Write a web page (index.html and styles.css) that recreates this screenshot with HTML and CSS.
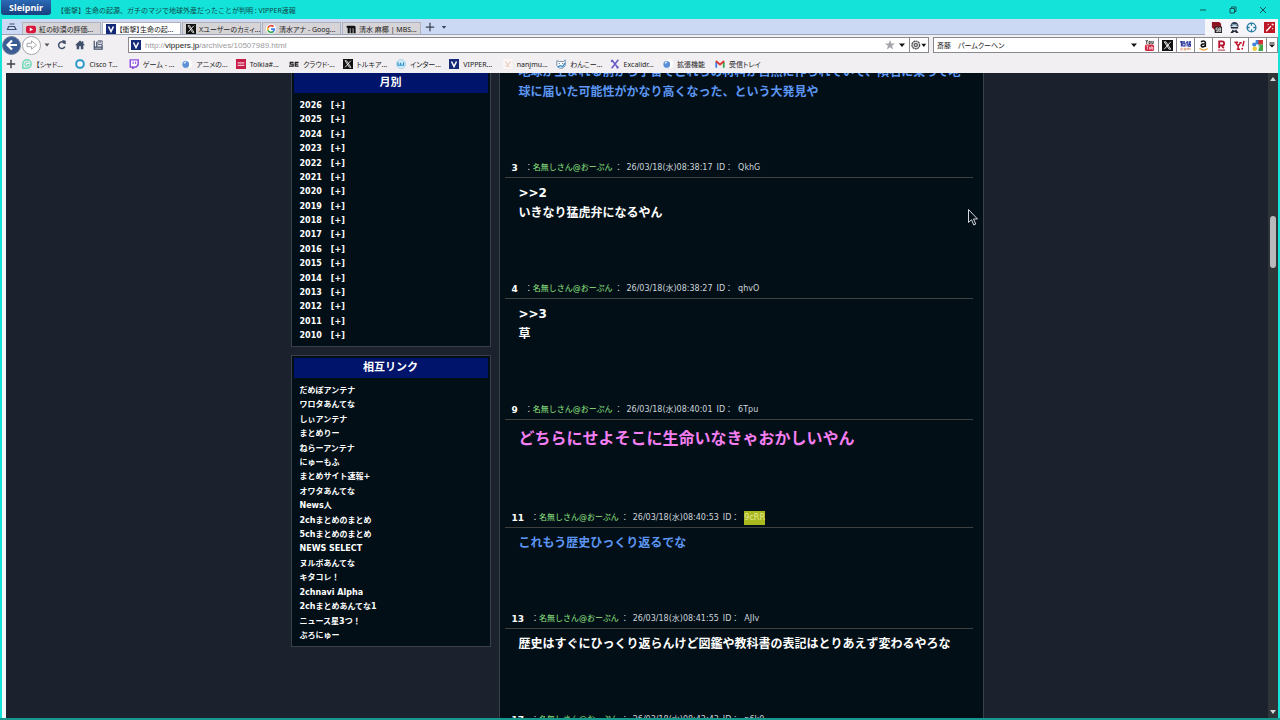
FILE: index.html
```
<!DOCTYPE html>
<html lang="ja">
<head>
<meta charset="utf-8">
<title>【衝撃】生命の起源、ガチのマジで地球外産だったことが判明 : VIPPER速報</title>
<link rel="stylesheet" href="styles.css">
</head>
<body>
<header class="titlebar">
  <button class="brand">Sleipnir</button>
  <span class="window-title">【衝撃】生命の起源、ガチのマジで地球外産だったことが判明 : VIPPER速報</span>
  <div class="window-buttons">
    <button aria-label="最小化"><svg viewBox="0 0 10 10"><path d="M2 5h6"/></svg></button>
    <button aria-label="元に戻す"><svg viewBox="0 0 10 10"><path d="M2 3.5h4.5V8H2zM3.5 3.500V2H8v4.500H6.500"/></svg></button>
    <button aria-label="閉じる"><svg viewBox="0 0 10 10"><path d="M2 2l6 6M8 2l-6 6"/></svg></button>
  </div>
</header>

<div class="chrome">
  <div class="tab-row">
    <button class="tab-home" aria-label="タブ一覧"><svg viewBox="0 0 12 12"><path d="M3.500 3h5M2.500 5.500h6l1.500 3H1.500z" fill="none" stroke="#3c506e" stroke-width="1.200"/></svg></button>
    <nav class="tabs">
      <button class="tab"><svg viewBox="0 0 12 12"><rect x="0" y="2" width="12" height="9" rx="2.500" fill="#d9163c"/><path d="M4.500 4.200l4 2.300-4 2.300z" fill="#fff"/></svg><span>紅の砂漠の評価...</span></button>
      <button class="tab active"><svg viewBox="0 0 12 12"><rect width="12" height="12" fill="#142a78"/><path d="M3 3l3 6 3-6" fill="none" stroke="#fff" stroke-width="1.800"/></svg><span>【衝撃】生命の起...</span></button>
      <button class="tab"><svg viewBox="0 0 12 12"><rect width="12" height="12" fill="#111"/><path d="M2.500 2h1.800l5.200 8H7.700zM9.500 2l-7 8" fill="none" stroke="#fff"/></svg><span>Xユーザーのカミィ...</span></button>
      <button class="tab"><svg viewBox="0 0 12 12"><circle cx="6" cy="6" r="6" fill="#fff"/><g fill="none" stroke-width="2"><path d="M9 3.200A4 4 0 0 0 2.400 4.500" stroke="#e8443a"/><path d="M2.400 4.500a4 4 0 0 0 0 3.200" stroke="#f2b91c"/><path d="M2.400 7.700A4 4 0 0 0 8.600 9" stroke="#35a552"/><path d="M8.600 9A4 4 0 0 0 10 6.200H6" stroke="#3f7ee8"/></g></svg><span>清水アナ - Goog...</span></button>
      <button class="tab"><svg viewBox="0 0 12 12"><path d="M1 2h9a2 2 0 0 1 1.500 2v7h-2.500V5H8v6H5.500V5H4.500v6H2V5L.5 4z" fill="#111"/></svg><span>清水 麻椰 | MBS...</span></button>
    </nav>
    <button class="new-tab" aria-label="新しいタブ"><svg viewBox="0 0 12 12"><path d="M6 1v10M1 6h10" stroke="#39424f" stroke-width="1.500"/></svg></button>
    <button class="tab-menu" aria-label="タブメニュー"><svg viewBox="0 0 12 12"><path d="M2.500 4.500h7L6 8.500z" fill="#39465b"/></svg></button>
    <div class="extensions">
      <button aria-label="ブロッカー"><svg viewBox="0 0 12 12"><path d="M1 0h8l2 2v4L6 10 1 6z" fill="#8d1420"/><rect x="4" y="5" width="8" height="7" fill="#222"/><path d="M7.500 6.500H5.500v2h2v2h-2M10.500 6.500h-2v4h2v-4M8.500 8.500h2" fill="none" stroke="#fff" stroke-width=".8"/></svg></button>
      <button aria-label="エージェント"><svg viewBox="0 0 12 12"><path d="M1.500 5C2 1 4 0 6 0s4 1 4.500 5z" fill="#2d3f55"/><path d="M3 3h6" stroke="#8fb6c9" stroke-width="1.200"/><circle cx="6" cy="6.500" r="3.200" fill="#d6e3ec"/><path d="M2 5.500h8V7H2zM1.500 12L4 8.500l2 1 2-1L10.500 12H8L6 10.500 4 12z" fill="#242a36"/></svg></button>
      <button aria-label="ターゲット"><svg viewBox="0 0 12 12"><circle cx="6" cy="6" r="4.800" fill="#f4fafd" stroke="#277a9f" stroke-width="1.400"/><path d="M6 1v3M6 8v3M1 6h3M8 6h3" stroke="#277a9f" stroke-width="1.400"/></svg></button>
      <button aria-label="ワンド"><svg viewBox="0 0 12 12"><rect width="12" height="12" fill="#bd1624"/><path d="M2.500 10l5-5.500" stroke="#fff" stroke-width="1.600"/><path d="M9 1.500v2M8.500 3h2.500M4.500 2v1.500M9.500 6.500V8" stroke="#fff"/></svg></button>
    </div>
  </div>

  <div class="toolbar">
    <div class="nav-buttons">
      <button class="round back" aria-label="戻る"><svg viewBox="0 0 12 12"><path d="M6 1.500L1.500 6 6 10.500M2 6h9" fill="none" stroke="#fff" stroke-width="2.200"/></svg></button>
      <button class="round forward" aria-label="進む"><svg viewBox="0 0 12 12"><path d="M1 4.300h4.500V1.800L10.500 6l-5 4.200V7.700H1z" fill="#fff" stroke="#a6a6ab"/></svg></button>
      <button class="caret" aria-label="履歴"><svg viewBox="0 0 12 12"><path d="M1 3h10L6 9z" fill="#4e5158"/></svg></button>
      <button class="tool" aria-label="更新"><svg viewBox="0 0 12 12"><path d="M9.500 8A4 4 0 1 1 8 2.800" fill="none" stroke="#41506a" stroke-width="1.800"/><path d="M6.500 0L10.500 1v4L7 4z" fill="#41506a"/></svg></button>
      <button class="tool" aria-label="ホーム"><svg viewBox="0 0 12 12"><path d="M6 .5L0 6.200h2V11h3V7.500h2V11h3V6.200h2L10 4.300V1.500H8.500v1.300z" fill="#41506a"/></svg></button>
      <button class="tool" aria-label="保存"><svg viewBox="0 0 12 12"><path d="M1.500 1v10h9.500V6M1.500 8.500H11M4.500 2v6.500" fill="none" stroke="#41506a" stroke-width="1.400"/><path d="M6 1h5v4.500H6z" fill="none" stroke="#41506a"/><path d="M8.500 1v3" stroke="#41506a" stroke-width="1.200"/></svg></button>
    </div>
    <div class="address">
      <svg class="site-icon" viewBox="0 0 12 12"><rect width="12" height="12" fill="#142a78"/><path d="M3 3l3 6 3-6" fill="none" stroke="#fff" stroke-width="1.800"/></svg>
      <div class="url" role="textbox" aria-label="アドレス" contenteditable="true" spellcheck="false">http://<b>vippers.jp</b>/archives/10507989.html</div>
      <button class="star" aria-label="ブックマーク"><svg viewBox="0 0 12 12"><path d="M6 0l1.600 4.200H12L8.500 7l1.300 4.500L6 8.800l-3.800 2.700L3.500 7 0 4.200h4.400z" fill="#a4a4aa"/></svg></button>
      <button class="drop" aria-label="候補"><svg viewBox="0 0 12 12"><path d="M0 3h12L6 10z" fill="#111"/></svg></button>
      <button class="engine" aria-label="エンジン"><svg viewBox="0 0 20 12"><circle cx="6" cy="6" r="4.800" fill="#ddd" stroke="#4b4b50" stroke-width="1.600" stroke-dasharray="2.500 .6"/><circle cx="6" cy="6" r="2" fill="none" stroke="#4b4b50" stroke-width="1.300"/><path d="M13 4.500h6L16 8.500z" fill="#111"/></svg></button>
    </div>
    <div class="search">
      <input type="text" aria-label="検索" value="斎藤　パームクーヘン">
      <button class="drop" aria-label="検索候補"><svg viewBox="0 0 12 12"><path d="M0 3h12L6 10z" fill="#111"/></svg></button>
    </div>
    <div class="engines">
      <button aria-label="YouTube"><svg viewBox="0 0 12 12"><rect x="1" y="5" width="10" height="7" rx="2" fill="#cf2540"/><path d="M2 0l1 2 1-2M3 2v2.500M5.500 1.500h1.300v2.500H5.500zM8.500 1v3H10V1" stroke="#222" fill="none" stroke-width=".9"/><path d="M2.500 6.500h2.500M3.700 6.500v4M6 7.500v2.500h1.300V7.500M8.500 6.500v3.500h1.300v-2H8.500" stroke="#fff" fill="none" stroke-width=".7"/></svg></button>
      <button aria-label="X"><svg viewBox="0 0 12 12"><rect width="12" height="12" fill="#111"/><path d="M2.500 2h1.800l5.200 8H7.700zM9.500 2l-7 8" fill="none" stroke="#fff"/></svg></button>
      <button aria-label="価格.com"><svg viewBox="0 0 12 12"><path d="M0 2h5.500M1.500 1v6M3 3.500h2.500v3H3zM6.500 3H9M7.800 1v6M9.300 2h2.500l-2 2.500M9.500 4.800h2v2h-2z" fill="none" stroke="#27309b" stroke-width="1.200"/><path d="M3 9H1v2h2M4.500 9h2v2h-2zM8 11V9h1.500v2M9.500 9H11v2" fill="none" stroke="#d58b60" stroke-width=".8"/></svg></button>
      <button aria-label="Amazon"><svg viewBox="0 0 12 12"><path d="M3.500 2.500C4 .5 8 .5 8 3v4.500M8 4.200C4.500 4 3.300 5 3.500 6.300c.4 1.800 3.500 1.500 4.500-.5" fill="none" stroke="#111" stroke-width="1.700"/><path d="M1.500 9c3 2.500 6.500 2.500 9 .3" fill="none" stroke="#eda73c" stroke-width="1.200"/></svg></button>
      <button aria-label="楽天"><svg viewBox="0 0 12 12"><path d="M3.500 9V1.500h3.200a2.200 2.200 0 0 1 0 4.400H3.500M6 6l2.500 3" fill="none" stroke="#b5142e" stroke-width="2"/><path d="M2 11h8" stroke="#b5142e"/></svg></button>
      <button aria-label="Yahoo!"><svg viewBox="0 0 12 12"><path d="M.5 2.500h4M2 3l2.500 3.500L7 3M4.500 6v4M3 10h3.500M6 3h2.500M11 1L9.500 7" fill="none" stroke="#c3142e" stroke-width="1.600"/><circle cx="9" cy="9.500" r="1" fill="#c3142e"/></svg></button>
      <button aria-label="Google"><svg viewBox="0 0 12 12"><path d="M4 0h4v5H4z" fill="#4285d9"/><path d="M7 0h5v5H7z" fill="#d33333"/><path d="M7 5h5v7H7z" fill="#41a84a"/><circle cx="2.500" cy="5" r="2.300" fill="#4285d9"/><circle cx="3" cy="9.500" r="2.500" fill="#f0cb3a"/><path d="M5 5l3 2-2 4" stroke="#fff" fill="none"/></svg></button>
      <button class="more" aria-label="その他"><svg viewBox="0 0 12 12"><path d="M1 2h10" stroke="#111" stroke-width="2"/><path d="M0 5h12l-6 6z" fill="#111"/></svg></button>
    </div>
  </div>

  <nav class="bookmarks">
    <button class="add" aria-label="追加"><svg viewBox="0 0 12 12"><path d="M6 1v10M1 6h10" stroke="#39424f" stroke-width="1.700"/></svg></button>
    <div class="bookmark-grid">
      <a href="#"><svg viewBox="0 0 12 12"><path d="M1 11V6a5 5 0 1 1 5 5z" fill="none" stroke="#6ed9b4" stroke-width="1.800"/><path d="M8 4.500a2.500 2.500 0 1 0 .5 2H6" fill="none" stroke="#6ed9b4" stroke-width="1.300"/></svg>【シャド...</a>
      <a href="#"><svg viewBox="0 0 12 12"><rect x="1.500" y="1.500" width="9" height="9" rx="4" fill="#fff" stroke="#2495c9" stroke-width="2.200"/></svg>Cisco T...</a>
      <a href="#"><svg viewBox="0 0 12 12"><path d="M1.500 1H11v6L8.500 9.500h-2L4.500 11.500v-2h-3z" fill="#fff" stroke="#8b49dc" stroke-width="1.700"/><path d="M5 3v3M8 3v3" stroke="#8b49dc" stroke-width="1.200"/></svg>ゲーム - ...</a>
      <a href="#"><svg viewBox="0 0 12 12"><path d="M5 0h5l2 2v9H5z" fill="#fff" stroke="#ddd" stroke-width=".5"/><circle cx="4.500" cy="6.500" r="4" fill="#5b90d6"/><path d="M2.500 5.500q1-2 2.500-1.500" stroke="#d9ecff" stroke-width="1.500" fill="none"/></svg>アニメの...</a>
      <a href="#"><svg viewBox="0 0 12 12"><rect width="12" height="12" fill="#c71c4a"/><path d="M2 4.500h8M2 7.500h8" stroke="#f6c6d4" stroke-width="1.500"/></svg>Tolkia#...</a>
      <a href="#"><svg viewBox="0 0 12 12"><path d="M5.500 4H1.500v2h3.500v2.500H0M11.500 4H7.500v4.500h4M7.500 6.200h3.500" fill="none" stroke="#222" stroke-width="1.500"/></svg>クラウド·...</a>
      <a href="#"><svg viewBox="0 0 12 12"><rect width="12" height="12" fill="#111"/><path d="M2.500 2h1.800l5.200 8H7.700zM9.500 2l-7 8" fill="none" stroke="#fff"/></svg>トルキア...</a>
      <a href="#"><svg viewBox="0 0 12 12"><circle cx="6" cy="6" r="5.500" fill="#cfeaf8" stroke="#a3d0e6"/><path d="M2.500 4v3.500h3V4.500M5.500 7.500h3.500V4" fill="none" stroke="#2793c6" stroke-width="1.400"/></svg>インター...</a>
      <a href="#"><svg viewBox="0 0 12 12"><rect width="12" height="12" fill="#142a78"/><path d="M3 3l3 6 3-6" fill="none" stroke="#fff" stroke-width="1.800"/></svg>VIPPER...</a>
      <a href="#"><svg viewBox="0 0 12 12"><rect width="11" height="12" fill="#fbf6f4"/><path d="M3 3l3 4 3-4M3 8l5 1" stroke="#dfb5a6" fill="none"/></svg>nanjmu...</a>
      <a href="#"><svg viewBox="0 0 12 12"><path d="M1 2l3 1h5l2-2v7l-3 3H4L1 8z" fill="#f7faff" stroke="#5f7d9f"/><path d="M4 5v1M8 5v1" stroke="#333"/><path d="M2 10l3-2 3 1 3-4" stroke="#2d86c5" stroke-width="1.500" fill="none"/></svg>わんこー...</a>
      <a href="#"><svg viewBox="0 0 12 12"><path d="M2 1l8 10M10 1L2 11M1 3l3-1M8 11l2-2" stroke="#6658c4" stroke-width="1.800"/></svg>Excalidr...</a>
    </div>
    <a class="wide" href="#"><svg viewBox="0 0 12 12"><path d="M5 0h5l2 2v9H5z" fill="#fff" stroke="#ddd" stroke-width=".5"/><circle cx="4.500" cy="6.500" r="4" fill="#5b90d6"/><path d="M2.500 5.500q1-2 2.500-1.500" stroke="#d9ecff" stroke-width="1.500" fill="none"/></svg>拡張機能</a>
    <a class="wide" href="#"><svg viewBox="0 0 12 12"><path d="M1.500 10.500v-7" stroke="#3f7ee8" stroke-width="2.200"/><path d="M10.500 10.500v-7" stroke="#35a552" stroke-width="2.200"/><path d="M1 2.500l5 4 5-4" fill="none" stroke="#da3c34" stroke-width="2.400"/></svg>受信トレイ</a>
  </nav>
</div>

<div class="viewport">
  <div class="page">
    <div class="columns">
      <aside class="sidebar">
        <section class="box archive">
          <h2>月別</h2>
          <ul>
            <li><a href="#">2026</a><a href="#">[+]</a></li>
            <li><a href="#">2025</a><a href="#">[+]</a></li>
            <li><a href="#">2024</a><a href="#">[+]</a></li>
            <li><a href="#">2023</a><a href="#">[+]</a></li>
            <li><a href="#">2022</a><a href="#">[+]</a></li>
            <li><a href="#">2021</a><a href="#">[+]</a></li>
            <li><a href="#">2020</a><a href="#">[+]</a></li>
            <li><a href="#">2019</a><a href="#">[+]</a></li>
            <li><a href="#">2018</a><a href="#">[+]</a></li>
            <li><a href="#">2017</a><a href="#">[+]</a></li>
            <li><a href="#">2016</a><a href="#">[+]</a></li>
            <li><a href="#">2015</a><a href="#">[+]</a></li>
            <li><a href="#">2014</a><a href="#">[+]</a></li>
            <li><a href="#">2013</a><a href="#">[+]</a></li>
            <li><a href="#">2012</a><a href="#">[+]</a></li>
            <li><a href="#">2011</a><a href="#">[+]</a></li>
            <li><a href="#">2010</a><a href="#">[+]</a></li>
          </ul>
        </section>
        <section class="box links">
          <h2>相互リンク</h2>
          <ul>
            <li><a href="#">だめぽアンテナ</a></li>
            <li><a href="#">ワロタあんてな</a></li>
            <li><a href="#">しぃアンテナ</a></li>
            <li><a href="#">まとめりー</a></li>
            <li><a href="#">ねらーアンテナ</a></li>
            <li><a href="#">にゅーもふ</a></li>
            <li><a href="#">まとめサイト速報+</a></li>
            <li><a href="#">オワタあんてな</a></li>
            <li><a href="#">News人</a></li>
            <li><a href="#">2chまとめのまとめ</a></li>
            <li><a href="#">5chまとめのまとめ</a></li>
            <li><a href="#">NEWS SELECT</a></li>
            <li><a href="#">ヌルポあんてな</a></li>
            <li><a href="#">キタコレ！</a></li>
            <li><a href="#">2chnavi Alpha</a></li>
            <li><a href="#">2chまとめあんてな1</a></li>
            <li><a href="#">ニュース星3つ！</a></li>
            <li><a href="#">ぶろにゅー</a></li>
          </ul>
        </section>
      </aside>
      <main class="thread">
        <article class="post scrolled">
          <p class="blue">地球が生まれる前から宇宙でこれらの材料が自然に作られていて、隕石に乗って地球に届いた可能性がかなり高くなった、という大発見や</p>
        </article>
        <article class="post">
          <header><b>3</b><span>：</span><i>名無しさん@おーぷん</i><span>：</span><time>26/03/18(水)08:38:17</time><span class="id">ID：</span><span>QkhG</span></header>
          <p>&gt;&gt;2<br>いきなり猛虎弁になるやん</p>
        </article>
        <article class="post">
          <header><b>4</b><span>：</span><i>名無しさん@おーぷん</i><span>：</span><time>26/03/18(水)08:38:27</time><span class="id">ID：</span><span>qhvO</span></header>
          <p>&gt;&gt;3<br>草</p>
        </article>
        <article class="post">
          <header><b>9</b><span>：</span><i>名無しさん@おーぷん</i><span>：</span><time>26/03/18(水)08:40:01</time><span class="id">ID：</span><span>6Tpu</span></header>
          <p class="pink">どちらにせよそこに生命いなきゃおかしいやん</p>
        </article>
        <article class="post">
          <header><b>11</b><span>：</span><i>名無しさん@おーぷん</i><span>：</span><time>26/03/18(水)08:40:53</time><span class="id">ID：</span><mark>9cRR</mark></header>
          <p class="blue">これもう歴史ひっくり返るでな</p>
        </article>
        <article class="post">
          <header><b>13</b><span>：</span><i>名無しさん@おーぷん</i><span>：</span><time>26/03/18(水)08:41:55</time><span class="id">ID：</span><span>AJIv</span></header>
          <p>歴史はすぐにひっくり返らんけど図鑑や教科書の表記はとりあえず変わるやろな</p>
        </article>
        <article class="post">
          <header><b>17</b><span>：</span><i>名無しさん@おーぷん</i><span>：</span><time>26/03/18(水)08:43:43</time><span class="id">ID：</span><span>p6k0</span></header>
        </article>
      </main>
    </div>
  </div>
  <div class="scrollbar">
    <svg viewBox="0 0 6 4"><path d="M3 0l3 4H0z" fill="#d6d6d6"/></svg>
    <div class="track"><div class="thumb"></div></div>
    <svg viewBox="0 0 6 4"><path d="M0 0h6L3 4z" fill="#d6d6d6"/></svg>
  </div>
</div>
<svg class="cursor" viewBox="0 0 10 17"><path d="M.5.5v13l3-2.800 2.300 5.300 2-1L5.500 10h4z" fill="#03101a" stroke="#d5d8dc"/></svg>
</body>
</html>
```
FILE: styles.css
```
* { box-sizing: border-box; }

body {
  margin: 0;
  height: 100vh;
  display: flex;
  flex-direction: column;
  overflow: hidden;
  position: relative;
  background: #13e3d8;
  border-bottom: 2px solid #16988f;
  font-family: "Noto Sans", "Noto Sans CJK JP", sans-serif;
  font-size: 7px;
  color: #222;
}

button {
  border: 0;
  padding: 0;
  background: none;
  font: inherit;
  color: inherit;
  display: flex;
  align-items: center;
  justify-content: center;
}

a { color: inherit; text-decoration: none; }
ul { list-style: none; margin: 0; padding: 0; }
svg { display: block; flex: none; }

/* Title bar */
.titlebar {
  flex: none;
  height: 19px;
  display: flex;
  align-items: center;
}
.brand {
  align-self: flex-start;
  width: 50px;
  height: 15px;
  margin-right: 6px;
  margin-left: 1px;
  border-radius: 0 0 3px 3px;
  background: linear-gradient(#2c69b4, #173f80);
  color: #fff;
  font: bold 9px "Noto Sans", sans-serif;
}
.window-title {
  flex: 1;
  color: #10494b;
}
.window-buttons { display: flex; gap: 20px; padding-right: 12px; }
.window-buttons svg { width: 10px; height: 10px; fill: none; stroke: #145454; }

/* Browser chrome */
.chrome {
  flex: none;
  margin: 0 2px;
  background: #f1eff2;
  font-feature-settings: "palt";
}
.tab-row {
  height: 16px;
  display: flex;
  background: #cbd9f4;
  border-bottom: 1px solid #9aa5b8;
}
.tab-home { width: 20px; }
.tab-home svg { width: 12px; height: 12px; }
.tabs { display: flex; gap: 1px; padding-top: 3px; }
.tab {
  width: 79px;
  padding-left: 3px;
  gap: 3px;
  justify-content: flex-start;
  background: #d6d4d7;
  border: 1px solid #b3b3bb;
  border-bottom: 0;
  white-space: nowrap;
}
.tab.active { background: #fff; }
.tab svg { width: 10px; height: 10px; }
.new-tab { width: 18px; }
.new-tab svg { width: 10px; height: 10px; }
.tab-menu { width: 10px; }
.tab-menu svg { width: 8px; height: 8px; }
.extensions {
  margin-left: auto;
  width: 73px;
  height: 16px;
  display: flex;
  align-items: center;
  justify-content: space-between;
  padding: 0 3px 0 6px;
  background: #f6f5fa;
}
.extensions svg { width: 11px; height: 11px; }

.toolbar {
  height: 20px;
  display: flex;
  align-items: center;
  gap: 4px;
}
.nav-buttons { width: 122px; display: flex; align-items: center; gap: 1px; }
.round { width: 19px; height: 19px; border-radius: 50%; }
.round svg { width: 12px; height: 12px; }
.back { background: #3a5c92; border: 1px solid #71839f; }
.forward { background: #fff; border: 1px solid #a6a6ab; }
.caret { width: 10px; }
.caret svg { width: 6px; height: 6px; }
.tool { width: 17px; }
.tool svg { width: 10px; height: 10px; }
.address {
  flex: 1;
  height: 16px;
  display: flex;
  align-items: center;
  background: #fff;
  border: 1px solid #8a8a8e;
}
.site-icon { width: 10px; height: 10px; margin: 0 4px 0 2px; }
.url { flex: 1; color: #9c9ca0; font-family: "Liberation Sans", sans-serif; font-size: 8px; }
.url b { font-weight: normal; color: #222; }
.star svg { width: 10px; height: 10px; }
.drop { width: 14px; }
.drop svg { width: 6px; height: 6px; }
.engine { width: 19px; height: 14px; border-left: 1px solid #8a8a8e; }
.engine svg { width: 16px; height: 10px; }
.search {
  width: 209px;
  height: 16px;
  display: flex;
  background: #fff;
  border: 1px solid #8a8a8e;
}
.search input {
  flex: 1;
  min-width: 0;
  border: 0;
  padding: 0 3px;
  background: none;
  font: inherit;
  font-feature-settings: "palt";
  color: #222;
}
.engines { display: flex; margin-left: -5px; }
.engines button {
  width: 18px;
  height: 16px;
  background: #fff;
  border: 1px solid #8a8a8e;
  border-left-width: 0;
}
.engines svg { width: 11px; height: 11px; }
.engines .more { width: 11px; }
.engines .more svg { width: 6px; height: 6px; }

.bookmarks {
  height: 18px;
  display: flex;
  align-items: center;
  white-space: nowrap;
}
.add { width: 20px; justify-content: flex-start; padding-left: 4px; }
.bookmarks svg { width: 10px; height: 10px; }
.bookmark-grid {
  width: 641px;
  display: grid;
  grid-template-columns: repeat(12, 1fr);
}
.bookmarks a { display: flex; align-items: center; gap: 4px; }
.bookmarks .wide { width: 52px; }

/* Page */
.viewport {
  flex: 1;
  min-height: 0;
  display: flex;
  margin-right: 2px;
  margin-left: 2px;
  border-left: 4px solid #f4f7f8;
}
.page {
  flex: 1;
  overflow: hidden;
  background: #1b222d;
  color: #fff;
  font-family: "DejaVu Sans", "Noto Sans CJK JP", sans-serif;
  font-size: 8px;
}
.columns {
  width: 693px;
  height: 100%;
  margin: 0 auto;
  display: flex;
  justify-content: space-between;
}
.sidebar { width: 200px; font-weight: bold; }
.box {
  margin-bottom: 8px;
  padding: 2px;
  background: #020f17;
  border: 1px solid #39404a;
}
.box h2 {
  margin: 0;
  background: #00146b;
  font-size: 11px;
  line-height: 20px;
  text-align: center;
}
.box ul {
  display: grid;
  align-content: space-between;
  padding: 6px 6px 1px;
  line-height: 14px;
}
.archive { padding-top: 0; border-top: 0; }
.archive ul { min-height: 251px; }
.links ul { min-height: 266px; }
.archive a { margin-right: 9px; }
.thread {
  width: 485px;
  padding: 0 10px 0 5px;
  background: #020f17;
  border: solid #39404a;
  border-width: 0 1px;
}
.scrolled { margin-top: -16px; }
.post header {
  height: 17px;
  display: flex;
  padding-left: 7px;
  border-bottom: 1px solid #3d4240;
  color: #ced4da;
  line-height: 14px;
  white-space: nowrap;
}
.post b { margin-right: 7px; font-size: 9px; color: #fff; }
.post i { font-style: normal; color: #93e884; margin-right: 2px; }
.post time { margin: 0 4px; }
.post .id { margin-right: 5px; }
.post mark { align-self: flex-start; background: #a9b81d; color: #e4e795; }
.post p {
  margin: 0;
  padding: 5px 10px 59px 14px;
  font-size: 12px;
  font-weight: bold;
  line-height: 20px;
}
.post .blue { color: #5c96f2; }
.post .pink { color: #f57ff2; font-size: 16px; line-height: 27px; }

.scrollbar {
  width: 10px;
  display: flex;
  flex-direction: column;
  align-items: center;
  padding: 4px 0;
  background: #2e3437;
}
.scrollbar svg { width: 6px; height: 4px; }
.track { flex: 1; width: 6px; padding-top: 135px; }
.thumb { height: 52px; border-radius: 3px; background: #b9b9bb; }

.cursor { position: absolute; left: 968px; top: 209px; width: 10px; height: 17px; }
```
